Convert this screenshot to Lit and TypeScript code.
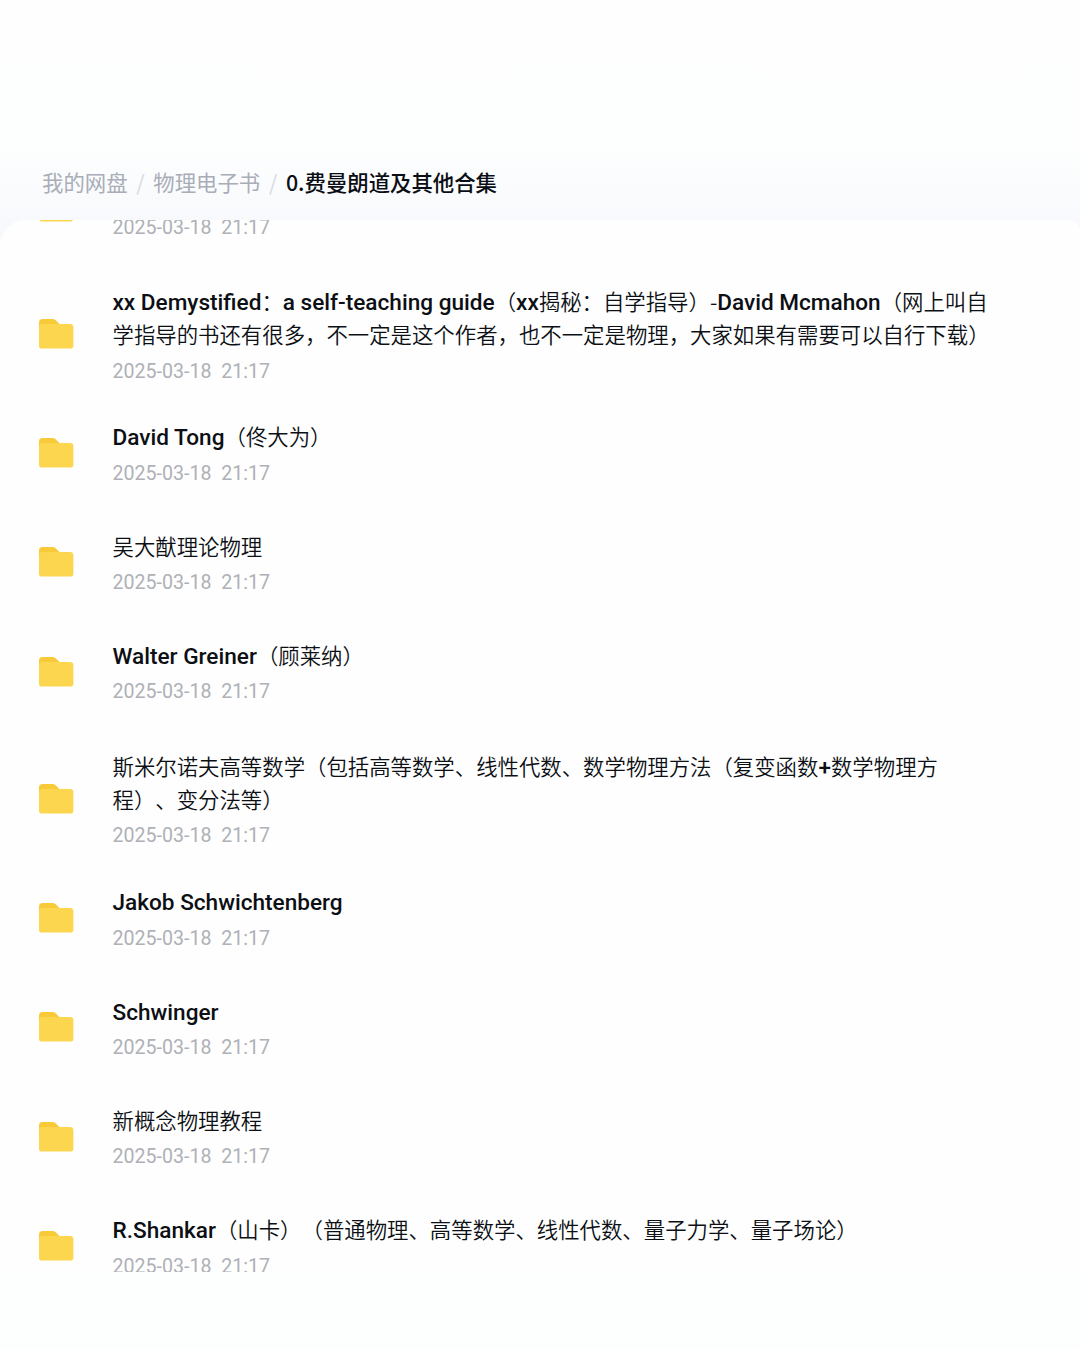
import { LitElement, html, css, svg } from "lit";
import { customElement, property } from "lit/decorators.js";

interface Folder {
  lines: string[];
  date: string;
}

const DATE = "2025-03-18  21:17";

const FOLDERS: Folder[] = [
  { lines: [""], date: DATE },
  {
    lines: [
      "xx Demystified：a self-teaching guide（xx揭秘：自学指导）-David Mcmahon（网上叫自",
      "学指导的书还有很多，不一定是这个作者，也不一定是物理，大家如果有需要可以自行下载）",
    ],
    date: DATE,
  },
  { lines: ["David Tong（佟大为）"], date: DATE },
  { lines: ["吴大猷理论物理"], date: DATE },
  { lines: ["Walter Greiner（顾莱纳）"], date: DATE },
  {
    lines: [
      "斯米尔诺夫高等数学（包括高等数学、线性代数、数学物理方法（复变函数+数学物理方",
      "程）、变分法等）",
    ],
    date: DATE,
  },
  { lines: ["Jakob Schwichtenberg"], date: DATE },
  { lines: ["Schwinger"], date: DATE },
  { lines: ["新概念物理教程"], date: DATE },
  { lines: ["R.Shankar（山卡）（普通物理、高等数学、线性代数、量子力学、量子场论）"], date: DATE },
];

/** Latin runs are set in medium Roboto, everything else in a lighter CJK face. */
const mixed = (text: string) =>
  text
    .split(/([A-Za-z+][A-Za-z+. -]*)/)
    .filter(Boolean)
    .map((run) => (/^[A-Za-z+]/.test(run) ? html`<span class="latin">${run}</span>` : run));

@customElement("folder-row")
class FolderRow extends LitElement {
  @property({ attribute: false }) folder!: Folder;

  static styles = css`
    :host {
      display: block;
    }
    .row {
      box-sizing: border-box;
      height: 109.35px;
      display: flex;
      padding-left: 38px;
      gap: 38.5px;
    }
    .row.tall {
      height: 136.9px;
    }
    .icon {
      width: 36px;
      height: 32px;
      flex: none;
      margin-top: 38.6px;
    }
    .tall .icon {
      margin-top: 56.8px;
    }
    .body {
      padding-top: 21px;
    }
    .tall .body {
      padding-top: 22.7px;
    }
    .title {
      min-height: 33px;
      font: 350 21.4px/33px "Noto Sans CJK SC", sans-serif;
      text-spacing-trim: space-all;
      color: #0c0f14;
    }
    .line {
      height: 33px;
      white-space: pre;
    }
    .latin {
      font-family: Roboto, sans-serif;
      font-weight: 500;
      font-size: 22.6px;
    }
    .date {
      margin-top: 7.4px;
      font: 400 19.6px/28px Roboto, sans-serif;
      white-space: pre;
      color: #aeb1b6;
    }
  `;

  render() {
    const { lines, date } = this.folder;
    return html`
      <div class="row ${lines.length > 1 ? "tall" : ""}">
        ${svg`<svg class="icon" viewBox="0 0 36 32">
          <path d="M1 12V4.6Q1 1 4.6 1H14.5Q16.2 1 17.4 2L21.5 6V14H1Z" fill="#f8ca38"/>
          <path d="M1 10Q1 6 5 6H32Q35.4 6 35.4 9.4V27.4Q35.4 30.6 32 30.6H4.4Q1 30.6 1 27.4Z" fill="#fcd64e"/>
        </svg>`}
        <div class="body">
          <div class="title">${lines.map((l) => html`<div class="line">${mixed(l)}</div>`)}</div>
          <div class="date">${date}</div>
        </div>
      </div>
    `;
  }
}

@customElement("app-root")
class AppRoot extends LitElement {
  static styles = css`
    :host {
      display: block;
    }
    .page {
      height: 1349px;
      overflow: hidden;
      display: flex;
      flex-direction: column;
      background: linear-gradient(#fefefe 0, #fdfefe 150px, #f7f9fc 220px, #f7f9fc 250px, #fefefe 251px);
    }
    .crumbs {
      box-sizing: border-box;
      height: 220px;
      padding: 165px 0 0 42px;
      display: flex;
      font: 400 21.4px/33px "Noto Sans CJK SC", sans-serif;
      color: #a9adb8;
    }
    .sep {
      width: 25.7px;
      text-align: center;
      color: #d8dae0;
    }
    .current {
      font-weight: 500;
      color: #0b0e14;
    }
    .panel {
      height: 1052px;
      overflow: hidden;
      background: #fefefe;
      border-radius: 26px 10px 0 0;
    }
    .list {
      margin-top: -67.9px;
    }
    .footer {
      flex: 1;
      background: #fdfefe;
    }
  `;

  render() {
    return html`
      <div class="page">
        <nav class="crumbs">
          <span>我的网盘</span><span class="sep">/</span><span>物理电子书</span
          ><span class="sep">/</span><span class="current">0.费曼朗道及其他合集</span>
        </nav>
        <main class="panel">
          <div class="list">
            ${FOLDERS.map((f) => html`<folder-row .folder=${f}></folder-row>`)}
          </div>
        </main>
        <div class="footer"></div>
      </div>
    `;
  }
}
